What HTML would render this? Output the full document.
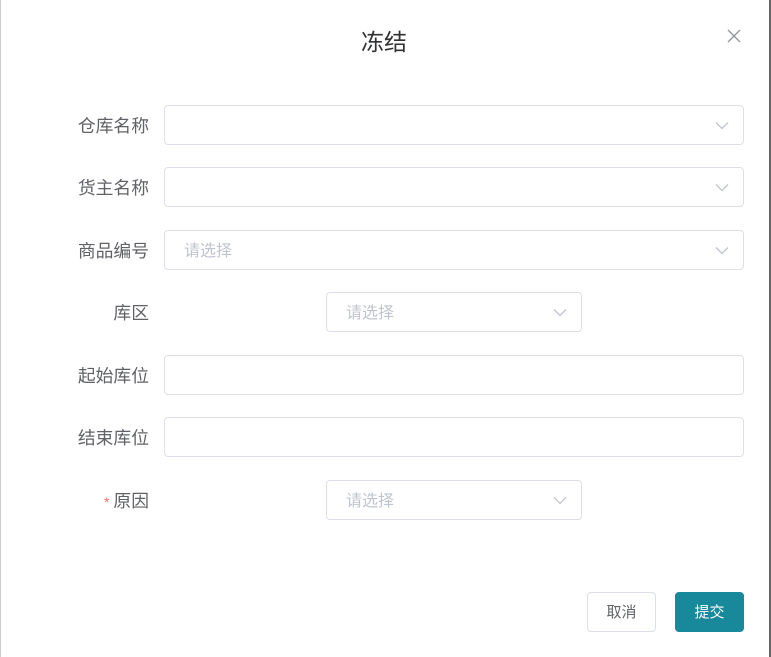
<!DOCTYPE html>
<html><head><meta charset="utf-8"><style>
body{margin:0;width:771px;height:657px;overflow:hidden;background:#fff;font-family:"Liberation Sans","Noto Sans CJK SC",sans-serif;position:relative}
.edge{position:absolute;top:0;bottom:0;right:0;width:2px;background:#666}
.ledge{position:absolute;top:0;bottom:0;left:0;width:1px;background:#ccc}
.t{position:absolute;top:26px;left:0;width:768px;text-align:center;font-size:23px;color:#303133;line-height:32px}
.x{position:absolute;left:727px;top:29px}
.l{position:absolute;right:622px;font-size:17.8px;color:#606266;line-height:42px;white-space:nowrap}
.i{position:absolute;box-sizing:border-box;height:40px;border:1px solid #dcdfe6;border-radius:4px;background:#fff}
.p{position:absolute;left:19px;top:0;line-height:41px;font-size:16px;color:#c0c4cc}
.a{position:absolute;right:14px;top:15px}
.b{position:absolute;top:592px;height:40px;box-sizing:border-box;border-radius:4px;font-size:15px;line-height:40px;text-align:center;width:69px}
</style></head><body>
<div class="ledge"></div><div class="edge"></div>
<div class="t">冻结</div>
<svg class="x" width="14" height="14" viewBox="0 0 14 14"><path d="M1 1L13 13M13 1L1 13" stroke="#909399" stroke-width="1.3"/></svg>

<div class="l" style="top:105px">仓库名称</div>
<div class="i" style="left:164px;top:105px;width:580px"><svg class="a" width="14" height="9" viewBox="0 0 14 9"><path d="M1 1.5L7 7.5L13 1.5" stroke="#c0c4cc" fill="none" stroke-width="1.3"/></svg></div>

<div class="l" style="top:167px">货主名称</div>
<div class="i" style="left:164px;top:167px;width:580px"><svg class="a" width="14" height="9" viewBox="0 0 14 9"><path d="M1 1.5L7 7.5L13 1.5" stroke="#c0c4cc" fill="none" stroke-width="1.3"/></svg></div>

<div class="l" style="top:230px">商品编号</div>
<div class="i" style="left:164px;top:230px;width:580px"><span class="p">请选择</span><svg class="a" width="14" height="9" viewBox="0 0 14 9"><path d="M1 1.5L7 7.5L13 1.5" stroke="#c0c4cc" fill="none" stroke-width="1.3"/></svg></div>

<div class="l" style="top:292px">库区</div>
<div class="i" style="left:326px;top:292px;width:256px"><span class="p">请选择</span><svg class="a" width="14" height="9" viewBox="0 0 14 9"><path d="M1 1.5L7 7.5L13 1.5" stroke="#c0c4cc" fill="none" stroke-width="1.3"/></svg></div>

<div class="l" style="top:355px">起始库位</div>
<div class="i" style="left:164px;top:355px;width:580px"></div>

<div class="l" style="top:417px">结束库位</div>
<div class="i" style="left:164px;top:417px;width:580px"></div>

<div class="l" style="top:480px"><span style="color:#f56c6c;font-size:14px;margin-right:4px">*</span>原因</div>
<div class="i" style="left:326px;top:480px;width:256px"><span class="p">请选择</span><svg class="a" width="14" height="9" viewBox="0 0 14 9"><path d="M1 1.5L7 7.5L13 1.5" stroke="#c0c4cc" fill="none" stroke-width="1.3"/></svg></div>

<div class="b" style="left:587px;border:1px solid #dcdfe6;color:#606266;background:#fff">取消</div>
<div class="b" style="left:675px;background:#17899b;color:#fff;border:1px solid #17899b">提交</div>
</body></html>
